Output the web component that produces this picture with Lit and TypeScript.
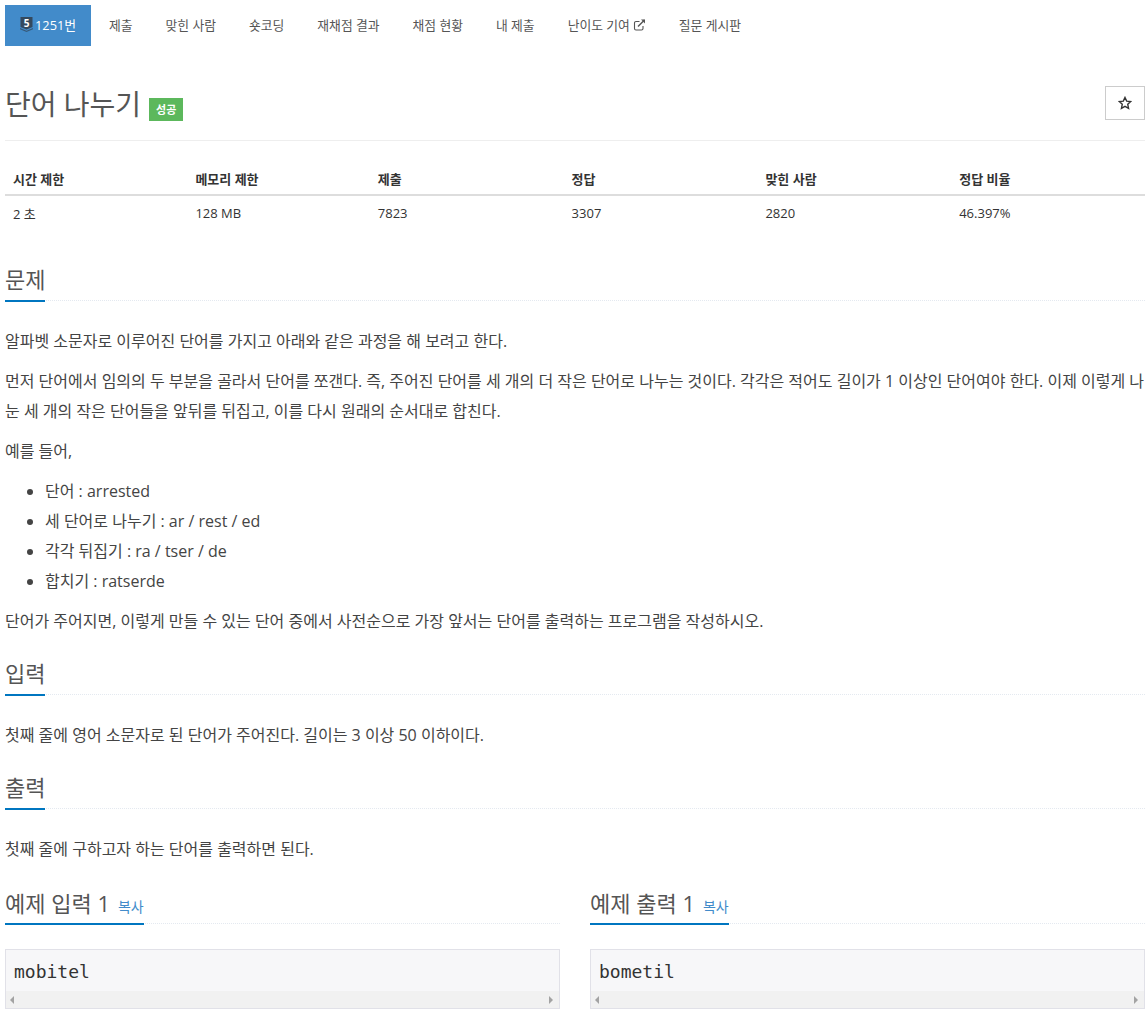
import {LitElement, html, css} from 'lit';
import {customElement} from 'lit/decorators.js';

const NAV = ['제출', '맞힌 사람', '숏코딩', '재채점 결과', '채점 현황', '내 제출'];

@customElement('app-root')
export class AppRoot extends LitElement {
  static styles = css`
    :host {
      display: block;
      padding: 5px 2px 0 5px;
      height: 1012px;
      overflow: hidden;
      box-sizing: border-box;
      background: #fff;
      color: #333;
      font-family: 'Open Sans', 'Noto Sans CJK KR', sans-serif;
      font-size: 16px;
    }
    .nav {
      display: flex;
      gap: 3px;
      height: 41px;
      font-size: 12.8px;
      color: #555;
    }
    .nav-item {
      display: flex;
      align-items: center;
      gap: 3px;
      padding: 0 15px 2px;
      white-space: nowrap;
    }
    .nav-item.active {
      background: #428bca;
      color: #fff;
      gap: 2px;
    }
    .title-row {
      display: flex;
      align-items: center;
      justify-content: space-between;
      margin-top: 40px;
      height: 34px;
      padding-bottom: 20px;
      border-bottom: 1px solid #eee;
    }
    .title {
      display: flex;
      align-items: center;
      gap: 8px;
    }
    h1 {
      margin: 2px 0 0;
      font-size: 28px;
      font-weight: 400;
      color: #555;
      line-height: 34px;
    }
    .badge {
      margin-top: 12px;
      background: #5cb85c;
      color: #fff;
      font-size: 11px;
      font-weight: 700;
      padding: 0 7px;
      line-height: 23px;
    }
    .star {
      display: flex;
      align-items: center;
      justify-content: center;
      width: 38px;
      height: 32px;
      border: 1px solid #ccc;
    }
    table {
      width: 100%;
      margin-top: 20px;
      border-collapse: collapse;
      table-layout: fixed;
      font-size: 13px;
    }
    th {
      text-align: left;
      padding: 8px 8px 6px;
      height: 19px;
      border-bottom: 2px solid #ddd;
      font-weight: 700;
    }
    td {
      padding: 7px 8px 9px;
      height: 20px;
    }
    section {
      margin-top: 22px;
    }
    section.first {
      margin-top: 32px;
    }
    .head {
      display: flex;
      align-items: flex-start;
      height: 36px;
      border-bottom: 1px dotted #e4e9f0;
      font-size: 22px;
      color: #555;
      line-height: 30px;
    }
    .label {
      display: flex;
      align-items: baseline;
      gap: 8px;
      height: 38px;
      border-bottom: 2px solid #0076c0;
      box-sizing: border-box;
    }
    .body {
      margin-top: 25px;
      line-height: 30px;
      color: #444;
    }
    p {
      margin: 0 0 10px;
    }
    ul.list {
      margin: 0 0 10px;
      padding-left: 40px;
    }
    .samples {
      display: grid;
      grid-template-columns: 1fr 1fr;
      gap: 30px;
      margin-top: 24px;
    }
    .copy {
      color: #428bca;
      font-size: 14px;
    }
    .sample-head {
      height: 35px;
    }
    .sample-head .label {
      height: 37px;
    }
    .pre {
      margin-top: 25px;
      border: 1px solid #e1e1e8;
      background: #f7f7f9;
      font-family: 'DejaVu Sans Mono', monospace;
      font-size: 18px;
      color: #333;
    }
    .pre-text {
      padding: 9px 8px 0;
      height: 32px;
      line-height: 26px;
    }
    .scrollbar {
      display: flex;
      align-items: center;
      justify-content: space-between;
      height: 17px;
      padding: 0 6px 0 4px;
      background: #f1f1f1;
    }
    .arrow-l,
    .arrow-r {
      width: 0;
      height: 0;
      border-top: 4px solid transparent;
      border-bottom: 4px solid transparent;
    }
    .arrow-l {
      border-right: 4px solid #a3a3a3;
    }
    .arrow-r {
      border-left: 4px solid #a3a3a3;
    }
  `;

  renderSample(title: string, text: string) {
    return html`
      <div>
        <div class="head sample-head">
          <span class="label">${title} <span class="copy">복사</span></span>
        </div>
        <div class="pre">
          <div class="pre-text">${text}</div>
          <div class="scrollbar"><i class="arrow-l"></i><i class="arrow-r"></i></div>
        </div>
      </div>
    `;
  }

  render() {
    return html`
      <div class="nav">
        <div class="nav-item active">
          <svg width="13" height="15" viewBox="0 0 13 15">
            <path d="M0.500 0h12v10l-6 2.500-6-2.500z" fill="#34495e" />
            <path d="M0 11l6.500 2.700L13 11v1.300L6.500 15 0 12.300z" fill="#34495e" opacity=".75" />
            <text x="6.500" y="9.500" text-anchor="middle" font-size="10" font-weight="700" fill="#fff">5</text>
          </svg>
          1251번
        </div>
        ${NAV.map((n) => html`<div class="nav-item">${n}</div>`)}
        <div class="nav-item">
          난이도 기여
          <svg width="13" height="12" viewBox="0 0 12 12" fill="none" stroke="#555" stroke-width="1.100">
            <path d="M9.500 7v2.500a1.500 1.500 0 0 1-1.500 1.500H2.500A1.500 1.500 0 0 1 1 9.500V4a1.500 1.500 0 0 1 1.500-1.500H6" />
            <path d="M4.500 7.500L11 1" stroke-width="1.400" />
            <path d="M7.500.600h4v4z" fill="#555" stroke="none" />
          </svg>
        </div>
        <div class="nav-item">질문 게시판</div>
      </div>

      <div class="title-row">
        <div class="title">
          <h1>단어 나누기</h1>
          <span class="badge">성공</span>
        </div>
        <div class="star">
          <svg width="14" height="14" viewBox="0 0 24 24" fill="none" stroke="#333" stroke-width="2.400">
            <path d="M12 2.500l2.900 6.300 6.900.8-5.100 4.700 1.400 6.800-6.100-3.400-6.100 3.400 1.400-6.800-5.100-4.700 6.900-.8z" />
          </svg>
        </div>
      </div>

      <table>
        <colgroup>
          <col style="width:16%" /><col style="width:16%" /><col style="width:17%" />
          <col style="width:17%" /><col style="width:17%" /><col style="width:17%" />
        </colgroup>
        <thead>
          <tr>
            <th>시간 제한</th><th>메모리 제한</th><th>제출</th><th>정답</th><th>맞힌 사람</th><th>정답 비율</th>
          </tr>
        </thead>
        <tbody>
          <tr>
            <td>2 초</td><td>128 MB</td><td>7823</td><td>3307</td><td>2820</td><td>46.397%</td>
          </tr>
        </tbody>
      </table>

      <section class="first">
        <div class="head"><span class="label">문제</span></div>
        <div class="body">
          <p>알파벳 소문자로 이루어진 단어를 가지고 아래와 같은 과정을 해 보려고 한다.</p>
          <p>먼저 단어에서 임의의 두 부분을 골라서 단어를 쪼갠다. 즉, 주어진 단어를 세 개의 더 작은 단어로 나누는 것이다. 각각은 적어도 길이가 1 이상인 단어여야 한다. 이제 이렇게 나눈 세 개의 작은 단어들을 앞뒤를 뒤집고, 이를 다시 원래의 순서대로 합친다.</p>
          <p>예를 들어,</p>
          <ul class="list">
            <li>단어 : arrested</li>
            <li>세 단어로 나누기 : ar / rest / ed</li>
            <li>각각 뒤집기 : ra / tser / de</li>
            <li>합치기 : ratserde</li>
          </ul>
          <p>단어가 주어지면, 이렇게 만들 수 있는 단어 중에서 사전순으로 가장 앞서는 단어를 출력하는 프로그램을 작성하시오.</p>
        </div>
      </section>

      <section>
        <div class="head"><span class="label">입력</span></div>
        <div class="body"><p>첫째 줄에 영어 소문자로 된 단어가 주어진다. 길이는 3 이상 50 이하이다.</p></div>
      </section>

      <section>
        <div class="head"><span class="label">출력</span></div>
        <div class="body"><p>첫째 줄에 구하고자 하는 단어를 출력하면 된다.</p></div>
      </section>

      <div class="samples">
        ${this.renderSample('예제 입력 1', 'mobitel')}
        ${this.renderSample('예제 출력 1', 'bometil')}
      </div>
    `;
  }
}
